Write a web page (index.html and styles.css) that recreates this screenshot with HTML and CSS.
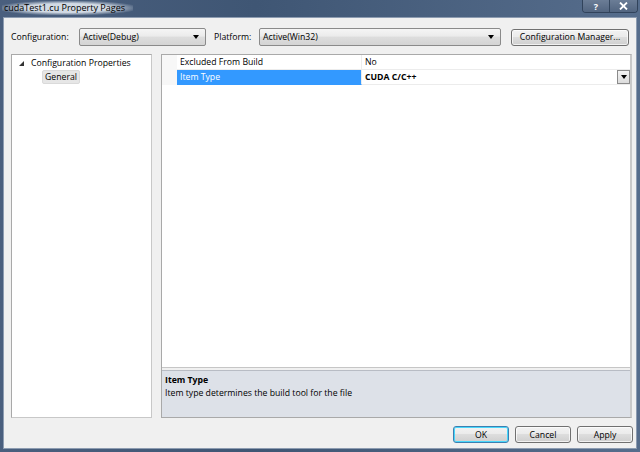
FILE: index.html
```html
<!DOCTYPE html>
<html>
<head>
<meta charset="utf-8">
<link rel="stylesheet" href="styles.css">
</head>
<body>
<div class="window">
  <div class="titlebar">
    <span class="title">cudaTest1.cu Property Pages</span>
    <div class="caption-btns">
      <span class="cbtn help">?</span>
      <span class="cbtn close">
        <svg width="9" height="8" viewBox="0 0 9 8"><path d="M1 0.5 L8 7.5 M8 0.5 L1 7.5" stroke="#fff" stroke-width="1.8"/></svg>
      </span>
    </div>
  </div>
  <div class="client">
    <div class="toprow">
      <span class="lbl lbl-config">Configuration:</span>
      <div class="combo combo-config"><span>Active(Debug)</span><span class="arrow"></span></div>
      <span class="lbl lbl-platform">Platform:</span>
      <div class="combo combo-platform"><span>Active(Win32)</span><span class="arrow"></span></div>
      <div class="btn btn-mgr">Configuration Manager...</div>
    </div>
    <div class="panes">
      <div class="tree">
        <div class="node root"><span class="expander"></span>Configuration Properties</div>
        <div class="node child"><span class="hover">General</span></div>
      </div>
      <div class="props">
        <div class="grid">
          <div class="row">
            <div class="margin"></div>
            <div class="name">Excluded From Build</div>
            <div class="value">No</div>
          </div>
          <div class="row selected">
            <div class="margin"></div>
            <div class="name">Item Type</div>
            <div class="value bold">CUDA C/C++<span class="ddbtn"><span class="arrow"></span></span></div>
          </div>
        </div>
        <div class="desc">
          <div class="desc-title">Item Type</div>
          <div class="desc-text">Item type determines the build tool for the file</div>
        </div>
      </div>
    </div>
    <div class="buttons">
      <div class="btn ok">OK</div>
      <div class="btn">Cancel</div>
      <div class="btn">Apply</div>
    </div>
  </div>
</div>
</body>
</html>
```

FILE: styles.css
```css
* { box-sizing: border-box; }
html, body { margin: 0; padding: 0; }
body {
  width: 640px;
  height: 452px;
  overflow: hidden;
  font-family: "Open Sans", "Noto Sans", sans-serif;
  font-size: 8.7px;
  color: #000;
}
.window {
  width: 640px;
  height: 452px;
  display: flex;
  flex-direction: column;
  background: linear-gradient(90deg, #4a5f7e 0%, #3f5674 40%, #566d8c 100%);
  padding: 0 3px 3px 3px;
}
.titlebar {
  height: 17px;
  display: flex;
  align-items: flex-start;
  justify-content: space-between;
  flex-shrink: 0;
}
.title {
  margin-top: 1px;
  margin-left: -1px;
  line-height: 14px;
  font-size: 9px;
  color: #000;
  padding: 0 8px 0 2px;
  background: radial-gradient(ellipse at center, rgba(225,232,240,0.9) 45%, rgba(225,232,240,0) 78%);
}
.caption-btns {
  display: flex;
  border: 1px solid #31435b;
  border-top: none;
  border-radius: 0 0 4px 4px;
  overflow: hidden;
  height: 13px;
  margin-right: -1px;
}
.cbtn {
  width: 27px;
  height: 12px;
  display: flex;
  align-items: center;
  justify-content: center;
  color: #fff;
  font-weight: bold;
  font-size: 9px;
  background: linear-gradient(#6b7d96, #526580);
}
.cbtn.help { border-right: 1px solid #33465e; }
.client {
  flex: 1;
  background: #f0f0f0;
  border: 1px solid #8d9cb1;
  display: flex;
  flex-direction: column;
  padding: 10px 4px 0 7px;
}
.toprow {
  display: flex;
  align-items: center;
  height: 18px;
}
.lbl { white-space: nowrap; }
.lbl-config { width: 68px; }
.lbl-platform { margin-left: 8px; width: 45px; }
.combo {
  height: 18px;
  border: 1px solid #8a8a8a;
  border-radius: 2px;
  background: linear-gradient(#f5f5f5 0%, #ebebeb 45%, #dddddd 50%, #d4d4d4 100%);
  display: flex;
  align-items: center;
  justify-content: space-between;
  padding: 0 6px 0 3px;
}
.combo-config { width: 127px; }
.combo-platform { width: 242px; }
.arrow {
  width: 0;
  height: 0;
  border-left: 3.5px solid transparent;
  border-right: 3.5px solid transparent;
  border-top: 4px solid #000;
}
.btn {
  height: 17px;
  border: 1px solid #707070;
  border-radius: 3px;
  background: linear-gradient(#f2f2f2 0%, #ebebeb 45%, #dddddd 50%, #cfcfcf 100%);
  display: flex;
  align-items: center;
  justify-content: center;
  box-shadow: inset 0 0 0 1px rgba(255,255,255,0.7);
  white-space: nowrap;
}
.btn-mgr { margin-left: 10px; width: 118px; }
.panes {
  display: flex;
  margin-top: 8px;
  height: 364px;
  gap: 9px;
}
.tree {
  width: 141px;
  background: #fff;
  border: 1px solid #a9a9a9;
  border-right-color: #c8c8c8;
  border-bottom-color: #c8c8c8;
  padding-top: 1px;
}
.node { height: 14px; line-height: 14px; white-space: nowrap; }
.root { display: flex; align-items: center; padding-left: 7px; }
.expander {
  width: 0; height: 0;
  border-left: 5px solid transparent;
  border-bottom: 5px solid #333;
  margin-right: 7px;
  margin-top: 1px;
}
.child { padding-left: 30px; }
.hover {
  display: inline-block;
  background: #e6e6e6;
  border: 1px solid #dadada;
  border-radius: 2px;
  padding: 0 2px;
  line-height: 12px;
  height: 14px;
}
.props {
  flex: 1;
  background: #f0f0f0;
  border: 1px solid #a9a9a9;
  border-right: 2px solid #c9c9c9;
  display: flex;
  flex-direction: column;
}
.grid {
  flex: 1;
  background: #fff;
  border-bottom: 1px solid #c6c6c6;
}
.row {
  display: flex;
  height: 15px;
  line-height: 14px;
}
.margin {
  width: 15px;
  background: #f7f7f7;
  flex-shrink: 0;
}
.name {
  width: 185px;
  padding-left: 3px;
  border-bottom: 1px solid #ececec;
  border-right: 1px solid #ececec;
  white-space: nowrap;
}
.value {
  flex: 1;
  padding-left: 3px;
  border-bottom: 1px solid #ececec;
  display: flex;
  justify-content: space-between;
  align-items: center;
  white-space: nowrap;
}
.selected .name { background: #3399ff; color: #fff; border-bottom-color: #3399ff; }
.bold { font-weight: bold; }
.ddbtn {
  width: 13px;
  height: 14px;
  border: 1px solid #8b8b8b;
  background: linear-gradient(#f4f4f4, #dcdcdc);
  display: flex;
  align-items: center;
  justify-content: center;
}
.desc {
  height: 47px;
  margin-top: 2px;
  background: #dde1e8;
  border-top: 1px solid #b8bcc4;
  padding: 3px 3px;
  line-height: 13px;
}
.desc-title { font-weight: bold; }
.buttons {
  display: flex;
  justify-content: flex-end;
  gap: 6px;
  margin-top: 8px;
  margin-right: -1px;
}
.buttons .btn { width: 56px; }
.btn.ok {
  border-color: #3c7fb1;
  box-shadow: inset 0 0 0 1px #48d7fb;
}
```
